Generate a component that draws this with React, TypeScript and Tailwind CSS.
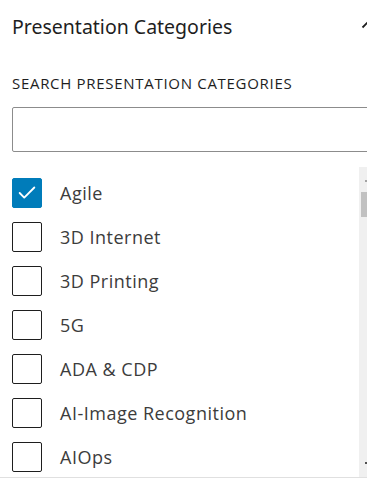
import { Check } from "lucide-react";

const CATEGORIES = [
  { name: "Agile", checked: true },
  { name: "3D Internet" },
  { name: "3D Printing" },
  { name: "5G" },
  { name: "ADA & CDP" },
  { name: "AI-Image Recognition" },
  { name: "AIOps" },
];

export default function App() {
  return (
    <div className="w-[367px] h-[487px] overflow-hidden bg-white font-['Open_Sans','Noto_Sans',sans-serif]">
      <div className="w-[392px]">
        <div className="px-3 pt-[14px] flex items-center justify-between">
          <h2 className="text-[19.5px] leading-[26px] text-[#1e1e1e] font-['Noto_Sans','Open_Sans',sans-serif]">Presentation Categories</h2>
          <svg width="24" height="24" viewBox="0 0 24 24" className="mr-[0px] mt-[-4px]">
            <path d="M6.5 14.5 L12 9 L17.5 14.5" fill="none" stroke="#1e1e1e" strokeWidth="1.8" />
          </svg>
        </div>

        <div className="px-3 pt-[33px]">
          <label className="block text-[15px] leading-[20px] tracking-[0.7px] uppercase text-[#1e1e1e]">Search Presentation Categories</label>
          <input type="text" className="mt-[14px] block w-full h-[45px] rounded-[2px] border border-[#8c8c8c] px-2 outline-none" />
        </div>

        <div className="mt-[15px] flex h-[311px] border-b border-[#e0e0e0]">
          <ul className="flex-1 overflow-hidden pl-3 pt-[4px]">
            {CATEGORIES.map((c) => (
              <li key={c.name} className="flex items-center h-[44px] gap-[18px]">
                <span
                  className={`w-[30px] h-[30px] rounded-[2px] flex items-center justify-center shrink-0 ${
                    c.checked ? "bg-[#007cba] border border-[#007cba]" : "border border-[#1e1e1e] bg-white"
                  }`}
                >
                  {c.checked && <Check className="w-[22px] h-[22px] text-white" strokeWidth={2} />}
                </span>
                <span className="text-[18px] tracking-[0.5px] text-[#3c3c3c]">{c.name}</span>
              </li>
            ))}
          </ul>
          <div className="w-[33px] bg-[#f0f0f0] flex flex-col items-center">
            <div className="w-full flex flex-col pl-[2px]">
              <div className="h-[15px] flex items-end pl-[4px]">
                <span className="w-[2px] h-[2px] bg-[#a3a3a3]" />
              </div>
              <div className="mt-[10px] w-[13px] h-[25px] bg-[#c1c1c1]" />
            </div>
            <div className="flex-1" />
            <div className="w-full h-[15px] pl-[6px] flex items-start">
              <span className="w-[2px] h-[2px] bg-[#505050]" />
            </div>
          </div>
        </div>
      </div>
    </div>
  );
}
